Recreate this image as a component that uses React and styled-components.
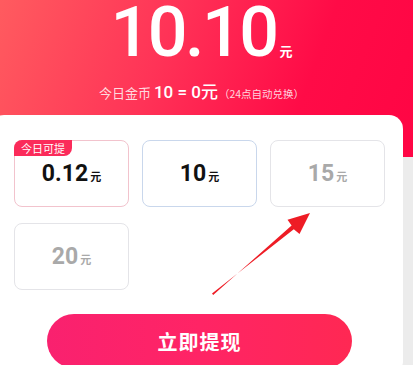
import React from 'react'
import styled, { createGlobalStyle } from 'styled-components'

const GlobalStyle = createGlobalStyle`
  html, body {
    margin: 0;
    padding: 0;
    background: #ececec;
    overflow: hidden;
  }
  body {
    font-family: Roboto, "Noto Sans CJK SC", "Noto Sans", sans-serif;
  }
`

const Page = styled.div`
  position: relative;
  width: 413px;
  height: 365px;
  overflow: hidden;
  background: #ececec;
`

const Header = styled.div`
  height: 157px;
  padding-right: 10px;
  box-sizing: border-box;
  background: linear-gradient(110deg, #ff5b5f 0%, #ff3357 38%, #ff0b47 72%, #ff0544 100%);
  display: flex;
  flex-direction: column;
  align-items: center;
  color: #fff;
`

const Amount = styled.div`
  margin-top: -4px;
  display: flex;
  align-items: baseline;
  line-height: 1.05;
`

const Big = styled.span`
  font-family: Roboto, sans-serif;
  font-size: 70px;
  font-weight: 500;
  letter-spacing: -2.5px;
`

const Unit = styled.span`
  font-size: ${p => p.size || 11}px;
  font-weight: 700;
  margin-left: ${p => p.gap || 2}px;
  font-family: "Noto Sans CJK SC", sans-serif;
  color: ${p => p.color || 'inherit'};
`

const Rate = styled.div`
  margin-top: 8px;
  display: flex;
  align-items: baseline;
  white-space: nowrap;
`

const Muted = styled.span`
  font-size: ${p => p.size}px;
  color: rgba(255, 255, 255, 0.82);
  font-family: "Noto Sans CJK SC", sans-serif;
`

const Strong = styled.span`
  font-size: 17px;
  font-weight: 500;
  margin: 0 1px 0 3px;
  font-family: Roboto, "Noto Sans CJK SC", sans-serif;
`

const Card = styled.div`
  margin: -42px 0 0 -10px;
  width: 413px;
  height: 260px;
  box-sizing: border-box;
  padding: 25px 0 0 24px;
  background: #fff;
  border-radius: 14px;
`

const Grid = styled.div`
  display: grid;
  grid-template-columns: repeat(3, 115px);
  column-gap: 13px;
  row-gap: 16px;
`

const Option = styled.div`
  position: relative;
  height: 67px;
  box-sizing: border-box;
  border: 1px solid ${p => p.border};
  border-radius: 8px;
  display: flex;
  align-items: center;
  justify-content: center;
  color: ${p => p.color};
`

const Badge = styled.div`
  position: absolute;
  top: -1px;
  left: -1px;
  height: 16px;
  padding: 0 7px;
  background: #fb2b5a;
  color: #fff;
  font-size: 11px;
  line-height: 16px;
  border-radius: 8px 0 8px 0;
  font-family: "Noto Sans CJK SC", sans-serif;
`

const Value = styled.div`
  display: flex;
  align-items: baseline;
`

const Num = styled.span`
  font-size: 23px;
  font-weight: 700;
  font-family: Roboto, sans-serif;
`

const Button = styled.button`
  display: block;
  margin: 24px 0 0 33px;
  width: 305px;
  height: 54px;
  border: none;
  border-radius: 27px;
  background: linear-gradient(90deg, #f9216f 0%, #ff2465 50%, #ff2853 100%);
  color: #fff;
  font-size: 20px;
  font-weight: 700;
  letter-spacing: 1px;
  font-family: "Noto Sans CJK SC", sans-serif;
  padding: 0;
`

const Arrow = styled.svg`
  position: absolute;
  top: 0;
  left: 0;
  pointer-events: none;
`

const options = [
  { value: '0.12', border: '#f2c3cd', color: '#111', badge: '今日可提' },
  { value: '10', border: '#c9d7ec', color: '#111' },
  { value: '15', border: '#e4e4e8', color: '#a9a9a9' },
  { value: '20', border: '#e4e4e8', color: '#a9a9a9' },
]

export default function App() {
  return (
    <Page>
      <GlobalStyle />
      <Header>
        <Amount>
          <Big>10.10</Big>
          <Unit size={13} gap={3}>元</Unit>
        </Amount>
        <Rate>
          <Muted size={13}>今日金币</Muted>
          <Strong>10 = 0元</Strong>
          <Muted size={10.5}>（24点自动兑换）</Muted>
        </Rate>
      </Header>
      <Card>
        <Grid>
          {options.map(o => (
            <Option key={o.value} border={o.border} color={o.color}>
              {o.badge && <Badge>{o.badge}</Badge>}
              <Value>
                <Num>{o.value}</Num>
                <Unit size={11} gap={2}>元</Unit>
              </Value>
            </Option>
          ))}
        </Grid>
        <Button>立即提现</Button>
      </Card>
      <Arrow width="413" height="365" viewBox="0 0 413 365">
        <polygon
          points="212,293.5 293.8,229.2 299.5,234 310,213 287.5,219.8 291.6,225.4 213.2,295"
          fill="#ee1c25"
        />
      </Arrow>
    </Page>
  )
}
